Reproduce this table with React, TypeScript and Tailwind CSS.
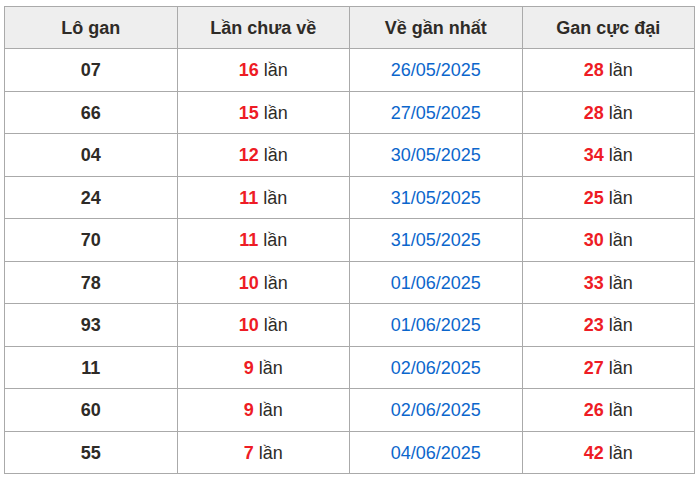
const rows = [
  { lo: "07", chua: 16, date: "26/05/2025", max: 28 },
  { lo: "66", chua: 15, date: "27/05/2025", max: 28 },
  { lo: "04", chua: 12, date: "30/05/2025", max: 34 },
  { lo: "24", chua: 11, date: "31/05/2025", max: 25 },
  { lo: "70", chua: 11, date: "31/05/2025", max: 30 },
  { lo: "78", chua: 10, date: "01/06/2025", max: 33 },
  { lo: "93", chua: 10, date: "01/06/2025", max: 23 },
  { lo: "11", chua: 9, date: "02/06/2025", max: 27 },
  { lo: "60", chua: 9, date: "02/06/2025", max: 26 },
  { lo: "55", chua: 7, date: "04/06/2025", max: 42 },
];

const cell = "border border-[#aaaaaa] pt-[2px] text-center align-middle";

export default function App() {
  return (
    <div className="min-h-[482px] bg-white pl-[4px] pt-[6px] font-['Liberation_Sans',Arial,sans-serif] text-[18px] text-[#2e2b27]">
      <table className="w-[691px] table-fixed border-collapse">
        <thead>
          <tr className="h-[42px] bg-[#eeeeee]">
            <th className={`${cell} font-bold`}>Lô gan</th>
            <th className={`${cell} font-bold`}>Lần chưa về</th>
            <th className={`${cell} font-bold`}>Về gần nhất</th>
            <th className={`${cell} font-bold`}>Gan cực đại</th>
          </tr>
        </thead>
        <tbody>
          {rows.map((r, i) => (
            <tr key={i} className="h-[42.5px]">
              <td className={`${cell} font-bold`}>{r.lo}</td>
              <td className={cell}>
                <span className="font-bold text-[#ee1c25]">{r.chua}</span> lần
              </td>
              <td className={`${cell} text-[#0b66cc]`}>{r.date}</td>
              <td className={cell}>
                <span className="font-bold text-[#ee1c25]">{r.max}</span> lần
              </td>
            </tr>
          ))}
        </tbody>
      </table>
    </div>
  );
}
